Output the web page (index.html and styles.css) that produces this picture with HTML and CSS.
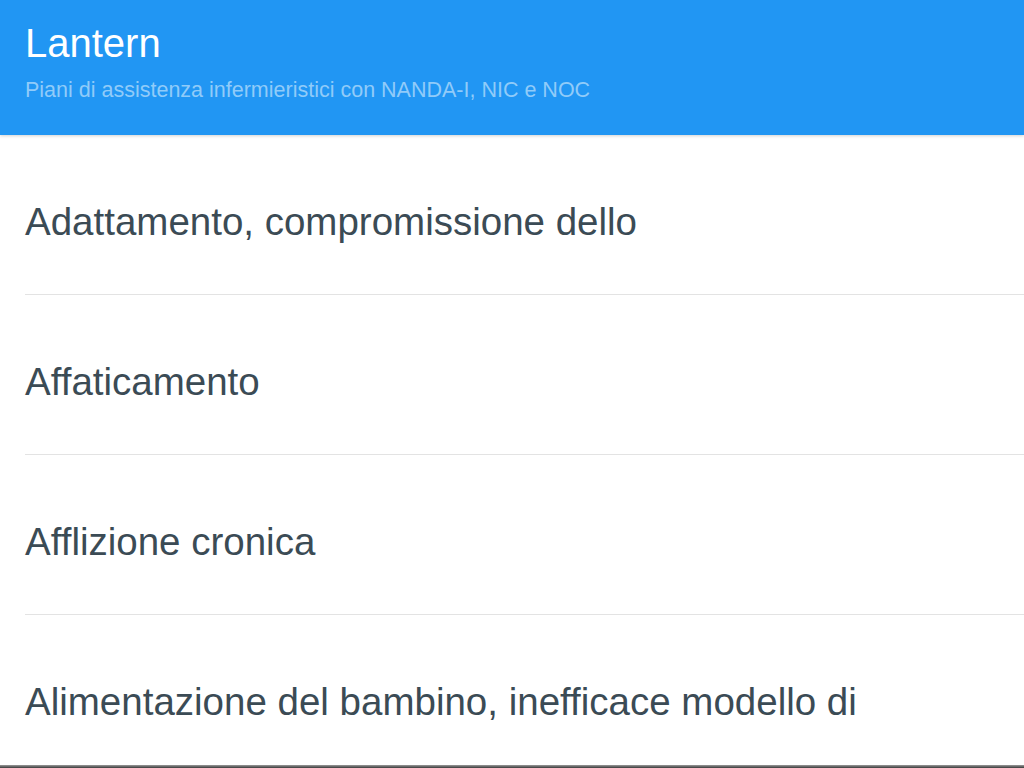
FILE: index.html
```html
<!DOCTYPE html>
<html lang="it">
<head>
<meta charset="utf-8">
<title>Lantern</title>
<link rel="stylesheet" href="styles.css">
</head>
<body>
<header class="app-bar">
  <h1 class="app-title">Lantern</h1>
  <p class="app-subtitle">Piani di assistenza infermieristici con NANDA-I, NIC e NOC</p>
</header>
<main>
  <ul class="diag-list">
    <li class="diag-item">Adattamento, compromissione dello</li>
    <li class="diag-item">Affaticamento</li>
    <li class="diag-item">Afflizione cronica</li>
    <li class="diag-item">Alimentazione del bambino, inefficace modello di</li>
  </ul>
</main>
<div class="bottom-edge"></div>
</body>
</html>
```
FILE: styles.css
```css
html, body {
  margin: 0;
  padding: 0;
  background: #ffffff;
  font-family: "Liberation Sans", Arial, sans-serif;
  overflow: hidden;
  height: 768px;
}

.app-bar {
  background: #2196f3;
  padding: 19px 25px 0;
  height: 135px;
  box-sizing: border-box;
  box-shadow: 0 1px 3px rgba(0, 0, 0, 0.18);
  position: relative;
  z-index: 1;
}

.app-title {
  margin: 0;
  font-size: 40px;
  line-height: 48px;
  font-weight: normal;
  color: #ffffff;
}

.app-subtitle {
  margin: 11px 0 0;
  font-size: 21.5px;
  line-height: 25px;
  color: #90cbf9;
}

.diag-list {
  list-style: none;
  margin: 0;
  padding: 0;
}

.diag-item {
  margin-left: 25px;
  padding: 65px 0 50px;
  font-size: 38.5px;
  line-height: 44px;
  color: #3b4b55;
  border-bottom: 1px solid #e3e3e3;
  white-space: nowrap;
}

.bottom-edge {
  position: fixed;
  left: 0;
  right: 0;
  bottom: 0;
  height: 3px;
  background: linear-gradient(#9a9a9a, #3a3a3a);
}
```
